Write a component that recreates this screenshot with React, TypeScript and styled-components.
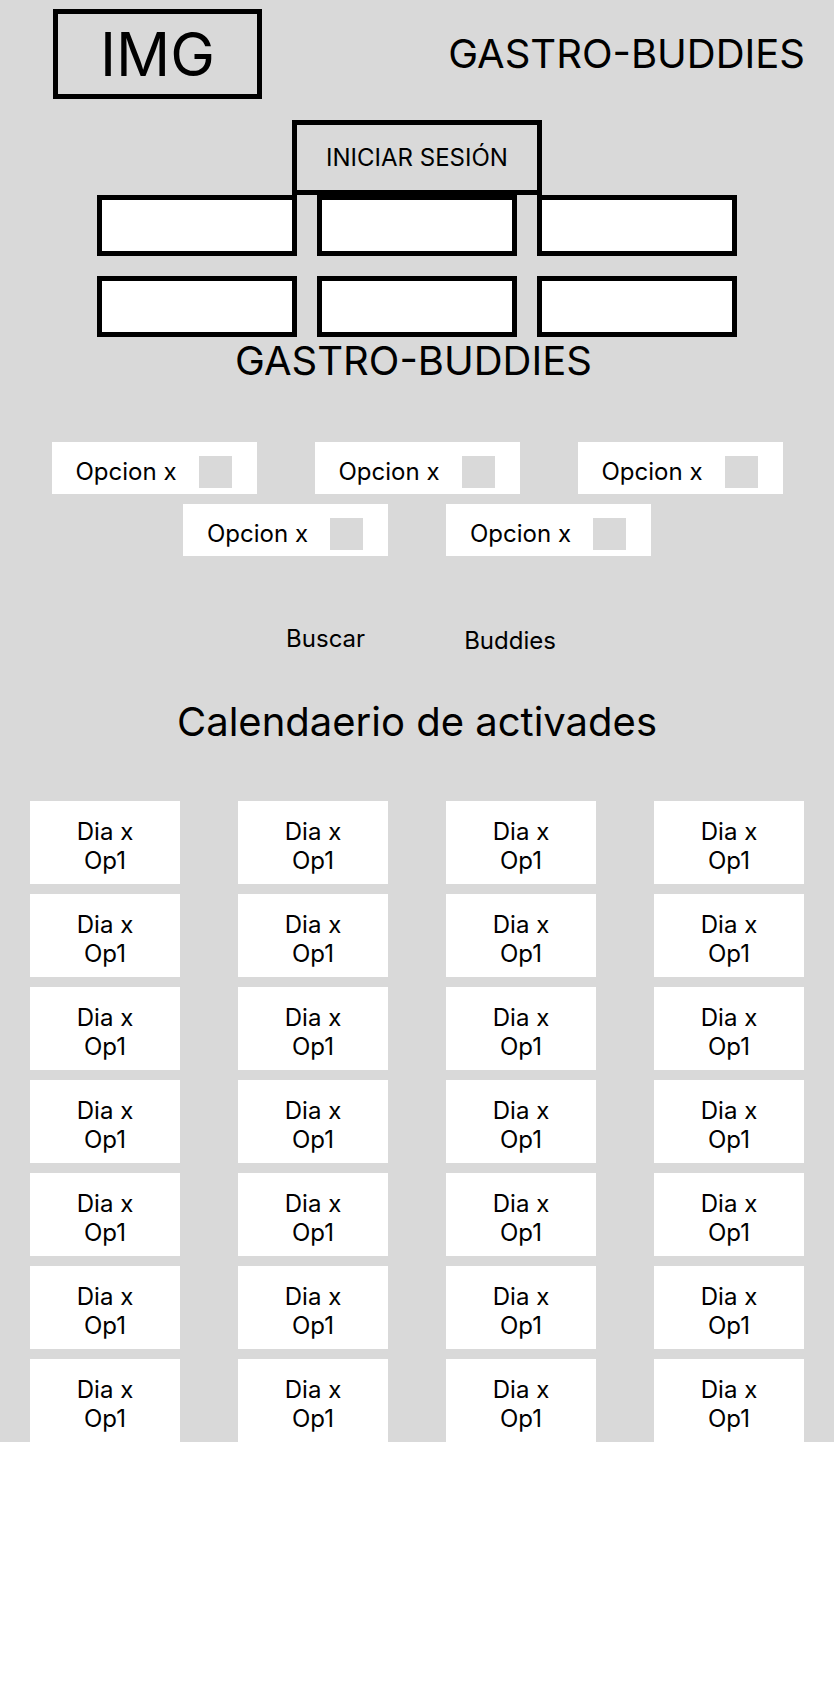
import React from 'react'
import styled, { createGlobalStyle } from 'styled-components'

const GlobalStyle = createGlobalStyle`
  html, body {
    margin: 0;
    padding: 0;
    background: #ffffff;
  }

  body {
    font-family: Inter, "Noto Sans", "Liberation Sans", sans-serif;
    color: #000000;
  }
`

const Frame = styled.main`
  width: 834px;
  background: #d9d9d9;
  overflow: hidden;
`

const Header = styled.header`
  display: flex;
  align-items: center;
  justify-content: space-between;
  padding: 9px 29px 0 53px;
`

const ImgBox = styled.div`
  box-sizing: border-box;
  width: 209px;
  height: 90px;
  border: 5px solid #000;
  display: flex;
  align-items: center;
  justify-content: center;
  font-size: 60px;
  line-height: 1;
`

const Title = styled.h1<{ centered?: boolean }>`
  margin: 0;
  padding-right: ${p => (p.centered ? '7px' : '0')};
  font-size: 40px;
  line-height: 48px;
  font-weight: 400;
  text-align: ${p => (p.centered ? 'center' : 'left')};
`

const Login = styled.section`
  display: flex;
  flex-direction: column;
  align-items: center;
  margin-top: 21px;
`

const LoginButton = styled.div`
  box-sizing: border-box;
  width: 250px;
  height: 75px;
  border: 5px solid #000;
  display: flex;
  align-items: center;
  justify-content: center;
  font-size: 24px;
`

const Inputs = styled.div`
  display: grid;
  grid-template-columns: repeat(3, 200px);
  grid-auto-rows: 61px;
  gap: 20px;
`

const Input = styled.div`
  box-sizing: border-box;
  background: #fff;
  border: 5px solid #000;
`

const Options = styled.div`
  display: flex;
  flex-wrap: wrap;
  justify-content: center;
  gap: 10px 58px;
  width: 731px;
  margin: 57px auto 0;
`

const Option = styled.label`
  box-sizing: border-box;
  width: 205px;
  height: 52px;
  padding: 7px 25px 0 24px;
  background: #fff;
  display: flex;
  align-items: center;
  justify-content: space-between;
  font-size: 24px;
`

const Check = styled.span`
  width: 33px;
  height: 32px;
  background: #d9d9d9;
`

const Links = styled.nav`
  display: flex;
  justify-content: center;
  align-items: flex-start;
  gap: 99px;
  padding-left: 8px;
  margin-top: 68px;
`

const Link = styled.span<{ drop?: number }>`
  font-size: 24px;
  line-height: 29px;
  margin-top: ${p => p.drop ?? 0}px;
`

const CalendarTitle = styled.h2`
  margin: 43px 0 0;
  font-size: 40px;
  line-height: 48px;
  font-weight: 400;
  text-align: center;
`

const Calendar = styled.div`
  display: grid;
  grid-template-columns: repeat(4, 150px);
  grid-auto-rows: 83px;
  gap: 10px 58px;
  justify-content: center;
  margin-top: 55px;
`

const Day = styled.div`
  box-sizing: border-box;
  background: #fff;
  padding-top: 16px;
  text-align: center;
  font-size: 24px;
  line-height: 29px;
`

const options = Array.from({ length: 5 }, (_, i) => i)
const days = Array.from({ length: 28 }, (_, i) => i)

export default function App() {
  return (
    <>
      <GlobalStyle />
      <Frame>
        <Header>
          <ImgBox>IMG</ImgBox>
          <Title>GASTRO-BUDDIES</Title>
        </Header>

        <Login>
          <LoginButton>INICIAR SESIÓN</LoginButton>
          <Inputs>
            {Array.from({ length: 6 }, (_, i) => (
              <Input key={i} />
            ))}
          </Inputs>
        </Login>

        <Title centered>GASTRO-BUDDIES</Title>

        <Options>
          {options.map(i => (
            <Option key={i}>
              Opcion x
              <Check />
            </Option>
          ))}
        </Options>

        <Links>
          <Link>Buscar</Link>
          <Link drop={2}>Buddies</Link>
        </Links>

        <CalendarTitle>Calendaerio de activades</CalendarTitle>

        <Calendar>
          {days.map(i => (
            <Day key={i}>
              Dia x
              <br />
              Op1
            </Day>
          ))}
        </Calendar>
      </Frame>
    </>
  )
}
